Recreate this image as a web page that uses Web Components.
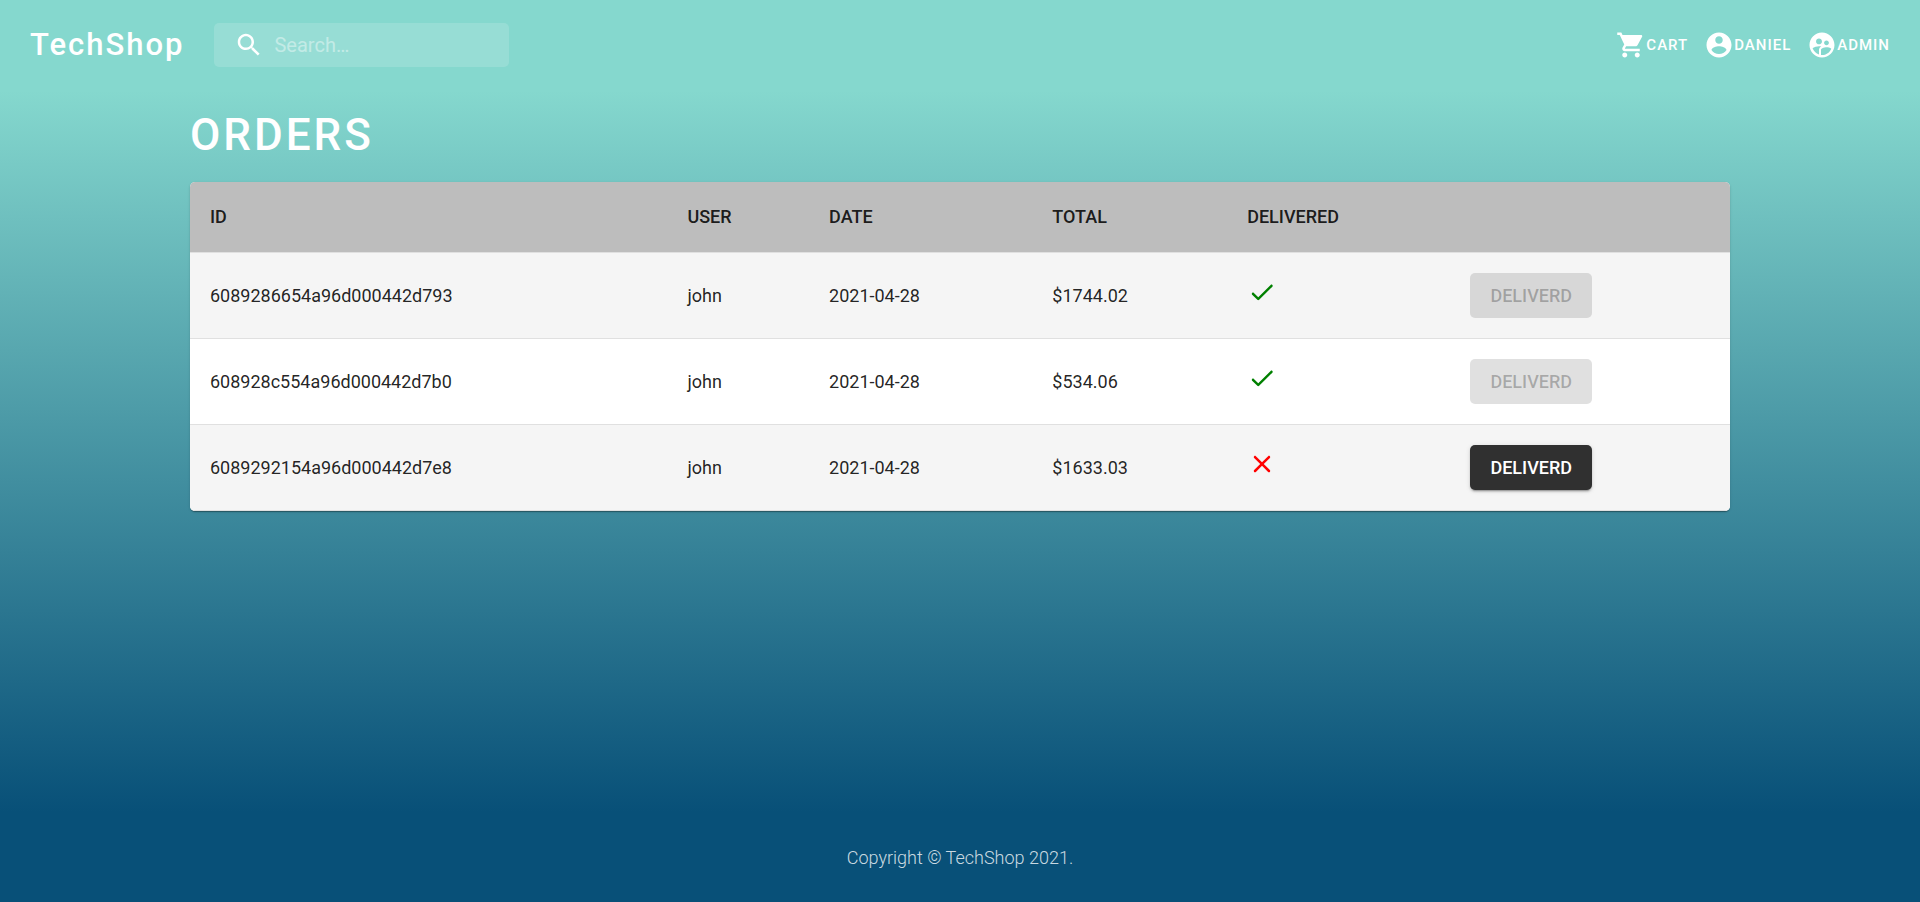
<!DOCTYPE html>
<html lang="en">
<head>
<meta charset="utf-8">
<meta name="viewport" content="width=device-width, initial-scale=1">
<title>TechShop - Orders</title>
<style>
  html { font-family: Roboto, sans-serif; font-size: 18px; line-height: 24px; }
  body { margin: 0; min-height: 100vh; background: linear-gradient(to top, #085078 10%, #85d8ce 90%); }
</style>
</head>
<body>
<shop-app></shop-app>

<script>
const ICONS = {
  search: 'M15.5 14h-.79l-.28-.27C15.41 12.59 16 11.11 16 9.5 16 5.91 13.09 3 9.5 3S3 5.91 3 9.5 5.91 16 9.5 16c1.61 0 3.09-.59 4.23-1.57l.27.28v.79l5 4.99L20.49 19l-4.99-5zm-6 0C7.01 14 5 11.99 5 9.5S7.01 5 9.5 5 14 7.01 14 9.5 11.99 14 9.5 14z',
  cart: 'M7 18c-1.1 0-1.99.9-1.99 2S5.9 22 7 22s2-.9 2-2-.9-2-2-2zM1 2v2h2l3.6 7.59-1.35 2.45c-.16.28-.25.61-.25.96 0 1.1.9 2 2 2h12v-2H7.42c-.14 0-.25-.11-.25-.25l.03-.12.9-1.63h7.45c.75 0 1.41-.41 1.75-1.03l3.58-6.49c.08-.14.12-.31.12-.48 0-.55-.45-1-1-1H5.21l-.94-2H1zm16 16c-1.1 0-1.99.9-1.99 2s.89 2 1.99 2 2-.9 2-2-.9-2-2-2z',
  account: 'M12 2C6.48 2 2 6.48 2 12s4.48 10 10 10 10-4.48 10-10S17.52 2 12 2zm0 3c1.66 0 3 1.34 3 3s-1.34 3-3 3-3-1.34-3-3 1.34-3 3-3zm0 14.2c-2.5 0-4.71-1.28-6-3.22.03-1.99 4-3.08 6-3.08 1.99 0 5.97 1.09 6 3.08-1.29 1.94-3.5 3.22-6 3.22z',
  admin: 'M11.99 2c-5.52 0-10 4.48-10 10s4.48 10 10 10 10-4.48 10-10-4.48-10-10-10zm3.61 6.34c1.07 0 1.93.86 1.93 1.93 0 1.07-.86 1.93-1.93 1.93-1.07 0-1.93-.86-1.93-1.93-.01-1.07.86-1.93 1.93-1.93zm-6-1.58c1.3 0 2.36 1.06 2.36 2.36 0 1.3-1.06 2.36-2.36 2.36s-2.36-1.06-2.36-2.36c0-1.31 1.05-2.36 2.36-2.36zm0 9.13v3.75c-2.4-.75-4.3-2.6-5.14-4.96 1.05-1.12 3.67-1.69 5.14-1.69.53 0 1.2.08 1.9.22-1.64.87-1.9 2.02-1.9 2.68zM11.99 20c-.27 0-.53-.01-.79-.04v-4.07c0-1.42 2.94-2.13 4.4-2.13 1.07 0 2.92.39 3.84 1.15-1.17 2.97-4.06 5.09-7.45 5.09z',
  done: 'M9 16.2l-3.5-3.5c-.39-.39-1.01-.39-1.4 0-.39.39-.39 1.01 0 1.4l4.19 4.19c.39.39 1.02.39 1.41 0L20.3 7.7c.39-.39.39-1.01 0-1.4-.39-.39-1.01-.39-1.4 0L9 16.2z',
  close: 'M18.3 5.71c-.39-.39-1.02-.39-1.41 0L12 10.59 7.11 5.7c-.39-.39-1.02-.39-1.41 0-.39.39-.39 1.02 0 1.41L10.59 12 5.7 16.89c-.39.39-.39 1.02 0 1.41.39.39 1.02.39 1.41 0L12 13.41l4.89 4.89c.39.39 1.02.39 1.41 0 .39-.39.39-1.02 0-1.41L13.41 12l4.89-4.89c.38-.38.38-1.02 0-1.4z'
};

class ShopIcon extends HTMLElement {
  connectedCallback() {
    if (this.shadowRoot) return;
    this.attachShadow({ mode: 'open' }).innerHTML = `
      <style>
        :host { display: inline-block; width: 30px; height: 30px; flex: none; }
        svg { display: block; width: 100%; height: 100%; fill: currentColor; }
      </style>
      <svg viewBox="0 0 24 24" aria-hidden="true"><path d="${ICONS[this.getAttribute('name')]}"/></svg>`;
  }
}

class ShopNavLink extends HTMLElement {
  connectedCallback() {
    if (this.shadowRoot) return;
    this.attachShadow({ mode: 'open' }).innerHTML = `
      <style>
        :host { display: block; }
        a { display: flex; align-items: center; color: #fff; text-decoration: none; text-transform: uppercase;
            font-size: 15px; font-weight: 500; letter-spacing: 1px; }
      </style>
      <a href="${this.getAttribute('href')}"><shop-icon name="${this.getAttribute('icon')}"></shop-icon><slot></slot></a>`;
  }
}

class ShopSearch extends HTMLElement {
  connectedCallback() {
    if (this.shadowRoot) return;
    this.attachShadow({ mode: 'open' }).innerHTML = `
      <style>
        :host { display: block; color: #fff; }
        label { display: flex; align-items: center; height: 44px; padding-left: 20px; border-radius: 5px;
                background: rgba(255,255,255,.15); }
        input { flex: 1; min-width: 0; margin: 0; padding: 0 10px; border: 0; outline: 0; background: none;
                color: inherit; font: inherit; font-size: 20px; }
        input::placeholder { color: inherit; opacity: .42; }
      </style>
      <label><shop-icon name="search"></shop-icon><input type="text" placeholder="Search…" aria-label="Search"></label>`;
  }
}

class ShopHeader extends HTMLElement {
  connectedCallback() {
    if (this.shadowRoot) return;
    this.attachShadow({ mode: 'open' }).innerHTML = `
      <style>
        :host { display: block; }
        header { display: flex; align-items: center; min-height: 90px; padding: 0 30px; box-sizing: border-box; }
        .brand { color: #fff; text-decoration: none; font-size: 31px; line-height: 40px; font-weight: 500; letter-spacing: 2px; }
        shop-search { flex: 0 1 295px; min-width: 0; margin-left: 30px; }
        nav { display: flex; gap: 16px; margin-left: auto; }
      </style>
      <header>
        <a class="brand" href="#/">TechShop</a>
        <shop-search></shop-search>
        <nav>
          <shop-nav-link href="#/cart" icon="cart">Cart</shop-nav-link>
          <shop-nav-link href="#/profile" icon="account">Daniel</shop-nav-link>
          <shop-nav-link href="#/admin" icon="admin">Admin</shop-nav-link>
        </nav>
      </header>`;
  }
}

class ShopButton extends HTMLElement {
  connectedCallback() {
    if (this.shadowRoot) return;
    this.attachShadow({ mode: 'open' }).innerHTML = `
      <style>
        :host { display: inline-block; vertical-align: middle; }
        button { display: block; margin: 0; padding: 10px 20px; border: 0; border-radius: 5px; cursor: pointer;
                 font: inherit; line-height: 25px; font-weight: 500; color: #fff; background: #303030; text-transform: uppercase;
                 box-shadow: 0 3px 1px -2px rgba(0,0,0,.2), 0 2px 2px rgba(0,0,0,.14), 0 1px 5px rgba(0,0,0,.12); }
        button:disabled { cursor: default; color: rgba(0,0,0,.26); background: rgba(0,0,0,.12); box-shadow: none; }
      </style>
      <button type="button" ${this.hasAttribute('disabled') ? 'disabled' : ''}><slot></slot></button>`;
  }
}

class OrdersTable extends HTMLElement {
  connectedCallback() {
    if (this.shadowRoot) return;
    const orders = [
      { id: '6089286654a96d000442d793', user: 'john', date: '2021-04-28', total: 1744.02, delivered: true },
      { id: '608928c554a96d000442d7b0', user: 'john', date: '2021-04-28', total: 534.06, delivered: true },
      { id: '6089292154a96d000442d7e8', user: 'john', date: '2021-04-28', total: 1633.03, delivered: false }
    ];
    const row = o => `
      <tr>
        <td>${o.id}</td><td>${o.user}</td><td>${o.date}</td><td>$${o.total.toFixed(2)}</td>
        <td><shop-icon class="${o.delivered ? 'yes' : 'no'}" name="${o.delivered ? 'done' : 'close'}"></shop-icon></td>
        <td><shop-button ${o.delivered ? 'disabled' : ''}>Deliverd</shop-button></td>
      </tr>`;
    this.attachShadow({ mode: 'open' }).innerHTML = `
      <style>
        :host { display: block; overflow: hidden; border-radius: 5px; background: #fff; color: rgba(0,0,0,.87);
                box-shadow: 0 2px 1px -1px rgba(0,0,0,.2), 0 1px 1px rgba(0,0,0,.14), 0 1px 3px rgba(0,0,0,.12); }
        table { width: 100%; border-collapse: separate; border-spacing: 0; table-layout: fixed; }
        th, td { padding: 20px; text-align: left; vertical-align: middle; border-bottom: 1px solid #e0e0e0; }
        th { background: #bdbdbd; line-height: 30px; font-weight: 500; text-transform: uppercase; }
        tbody tr:nth-child(odd) { background: #f5f5f5; }
        td { height: 45px; line-height: 26px; }
        td:nth-child(n+5) { padding-top: 0; padding-bottom: 0; height: 85px; }
        .id { width: 31%; } .user { width: 9.2%; } .date { width: 14.5%; } .total { width: 12.65%; } .delivered { width: 14.5%; }
        .yes { color: green; } .no { color: red; }
      </style>
      <table>
        <colgroup><col class="id"><col class="user"><col class="date"><col class="total"><col class="delivered"><col></colgroup>
        <thead><tr><th scope="col">Id</th><th scope="col">User</th><th scope="col">Date</th><th scope="col">Total</th><th scope="col">Delivered</th><th></th></tr></thead>
        <tbody>${orders.map(row).join('')}</tbody>
      </table>`;
  }
}

class ShopFooter extends HTMLElement {
  connectedCallback() {
    if (this.shadowRoot) return;
    this.attachShadow({ mode: 'open' }).innerHTML = `
      <style>
        :host { display: block; padding: 32px 30px; text-align: center; color: rgba(255,255,255,.8); font-weight: 300; }
        p { margin: 0; }
      </style>
      <footer><p>Copyright © TechShop 2021.</p></footer>`;
  }
}

class ShopApp extends HTMLElement {
  connectedCallback() {
    if (this.shadowRoot) return;
    this.attachShadow({ mode: 'open' }).innerHTML = `
      <style>
        :host { display: flex; flex-direction: column; min-height: 100vh; }
        main { flex: 1; width: 100%; max-width: 1600px; margin: 0 auto; padding: 16px 30px; box-sizing: border-box; }
        h1 { margin: 0 0 18px; color: #fff; font-size: 44px; line-height: 58px; font-weight: 500; letter-spacing: 3px; text-transform: uppercase; }
      </style>
      <shop-header></shop-header>
      <main>
        <h1>Orders</h1>
        <orders-table></orders-table>
      </main>
      <shop-footer></shop-footer>`;
  }
}

customElements.define('shop-icon', ShopIcon);
customElements.define('shop-nav-link', ShopNavLink);
customElements.define('shop-search', ShopSearch);
customElements.define('shop-header', ShopHeader);
customElements.define('shop-button', ShopButton);
customElements.define('orders-table', OrdersTable);
customElements.define('shop-footer', ShopFooter);
customElements.define('shop-app', ShopApp);
</script>
</body>
</html>
